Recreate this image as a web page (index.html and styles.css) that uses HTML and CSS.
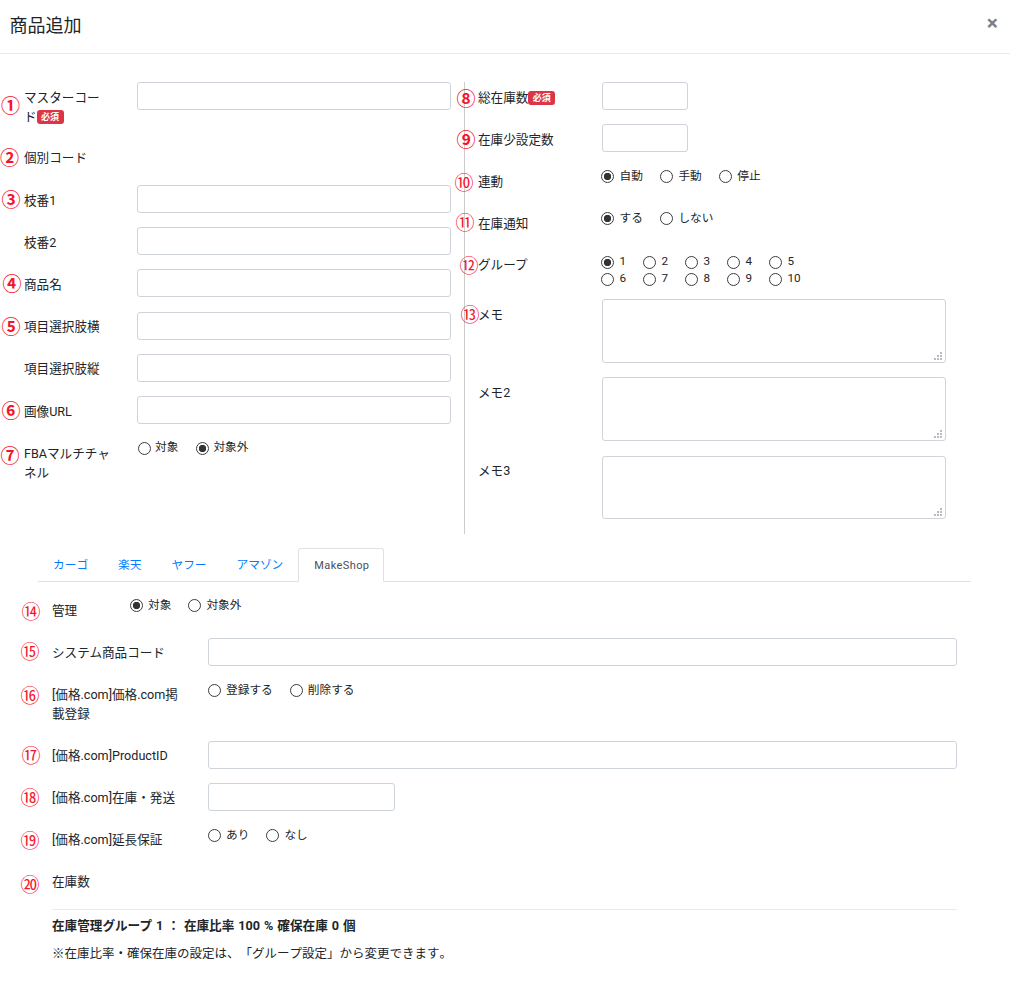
FILE: index.html
```html
<!DOCTYPE html>
<html lang="ja">
<head>
<meta charset="utf-8">
<title>商品追加</title>
<link rel="stylesheet" href="styles.css">
</head>
<body>
<div class="page">
  <header class="head">
    <h1 class="title">商品追加</h1>
    <span class="close">×</span>
  </header>

  <div class="main">
    <div class="col-left">
      <div class="row row-tall"><label class="lbl">マスターコード<span class="badge">必須</span></label><input class="inp inp-left" type="text"></div>
      <div class="row"><label class="lbl">個別コード</label></div>
      <div class="row"><label class="lbl">枝番1</label><input class="inp inp-left" type="text"></div>
      <div class="row"><label class="lbl">枝番2</label><input class="inp inp-left" type="text"></div>
      <div class="row"><label class="lbl">商品名</label><input class="inp inp-left" type="text"></div>
      <div class="row"><label class="lbl">項目選択肢横</label><input class="inp inp-left" type="text"></div>
      <div class="row"><label class="lbl">項目選択肢縦</label><input class="inp inp-left" type="text"></div>
      <div class="row"><label class="lbl">画像URL</label><input class="inp inp-left" type="text"></div>
      <div class="row">
        <label class="lbl">FBAマルチチャネル</label>
        <div class="radios radios-left">
          <label class="radio"><input type="radio" name="fba"><span>対象</span></label>
          <label class="radio"><input type="radio" name="fba" checked><span>対象外</span></label>
        </div>
      </div>
    </div>

    <div class="col-right">
      <div class="row"><label class="lbl-r">総在庫数<span class="badge">必須</span></label><input class="inp inp-short" type="text"></div>
      <div class="row"><label class="lbl-r">在庫少設定数</label><input class="inp inp-short" type="text"></div>
      <div class="row">
        <label class="lbl-r">連動</label>
        <div class="radios radios-right">
          <label class="radio"><input type="radio" name="link" checked><span>自動</span></label>
          <label class="radio"><input type="radio" name="link"><span>手動</span></label>
          <label class="radio"><input type="radio" name="link"><span>停止</span></label>
        </div>
      </div>
      <div class="row">
        <label class="lbl-r">在庫通知</label>
        <div class="radios radios-right">
          <label class="radio"><input type="radio" name="notify" checked><span>する</span></label>
          <label class="radio"><input type="radio" name="notify"><span>しない</span></label>
        </div>
      </div>
      <div class="row row-group">
        <label class="lbl-r">グループ</label>
        <div class="radio-grid">
          <label class="radio"><input type="radio" name="grp" checked><span>1</span></label>
          <label class="radio"><input type="radio" name="grp"><span>2</span></label>
          <label class="radio"><input type="radio" name="grp"><span>3</span></label>
          <label class="radio"><input type="radio" name="grp"><span>4</span></label>
          <label class="radio"><input type="radio" name="grp"><span>5</span></label>
          <label class="radio"><input type="radio" name="grp"><span>6</span></label>
          <label class="radio"><input type="radio" name="grp"><span>7</span></label>
          <label class="radio"><input type="radio" name="grp"><span>8</span></label>
          <label class="radio"><input type="radio" name="grp"><span>9</span></label>
          <label class="radio"><input type="radio" name="grp"><span>10</span></label>
        </div>
      </div>
      <div class="row"><label class="lbl-r">メモ</label><textarea class="memo"></textarea></div>
      <div class="row row-memo2"><label class="lbl-r">メモ2</label><textarea class="memo"></textarea></div>
      <div class="row row-memo3"><label class="lbl-r">メモ3</label><textarea class="memo memo-short"></textarea></div>
    </div>
  </div>

  <nav class="tabs">
    <a class="tab">カーゴ</a>
    <a class="tab">楽天</a>
    <a class="tab">ヤフー</a>
    <a class="tab">アマゾン</a>
    <a class="tab tab-active">MakeShop</a>
  </nav>

  <section class="panel">
    <div class="row">
      <label class="lbl-b lbl-narrow">管理</label>
      <div class="radios radios-bottom">
        <label class="radio"><input type="radio" name="mng" checked><span>対象</span></label>
        <label class="radio"><input type="radio" name="mng"><span>対象外</span></label>
      </div>
    </div>
    <div class="row"><label class="lbl-b">システム商品コード</label><input class="inp inp-wide" type="text"></div>
    <div class="row row-tall">
      <label class="lbl-b">[価格.com]価格.com掲載登録</label>
      <div class="radios radios-bottom">
        <label class="radio"><input type="radio" name="kakaku"><span>登録する</span></label>
        <label class="radio"><input type="radio" name="kakaku"><span>削除する</span></label>
      </div>
    </div>
    <div class="row"><label class="lbl-b">[価格.com]ProductID</label><input class="inp inp-wide" type="text"></div>
    <div class="row"><label class="lbl-b">[価格.com]在庫・発送</label><input class="inp inp-mid" type="text"></div>
    <div class="row">
      <label class="lbl-b">[価格.com]延長保証</label>
      <div class="radios radios-bottom">
        <label class="radio"><input type="radio" name="warranty"><span>あり</span></label>
        <label class="radio"><input type="radio" name="warranty"><span>なし</span></label>
      </div>
    </div>
    <div class="row row-stock"><label class="lbl-b">在庫数</label></div>
    <div class="stock">
      <p class="stock-main">在庫管理グループ 1 ： 在庫比率 100 % 確保在庫 0 個</p>
      <p class="stock-note">※在庫比率・確保在庫の設定は、「グループ設定」から変更できます。</p>
    </div>
  </section>

  <span class="pin bold p1">①</span>
  <span class="pin bold p2">②</span>
  <span class="pin bold p3">③</span>
  <span class="pin bold p4">④</span>
  <span class="pin bold p5">⑤</span>
  <span class="pin bold p6">⑥</span>
  <span class="pin bold p7">⑦</span>
  <span class="pin bold p8">⑧</span>
  <span class="pin bold p9">⑨</span>
  <span class="pin p10">⑩</span>
  <span class="pin p11">⑪</span>
  <span class="pin p12">⑫</span>
  <span class="pin p13">⑬</span>
  <span class="pin p14">⑭</span>
  <span class="pin p15">⑮</span>
  <span class="pin p16">⑯</span>
  <span class="pin p17">⑰</span>
  <span class="pin p18">⑱</span>
  <span class="pin p19">⑲</span>
  <span class="pin p20">⑳</span>
</div>
</body>
</html>
```
FILE: styles.css
```css
* { box-sizing: border-box; }
html, body { margin: 0; padding: 0; background: #fff; }
body {
  font-family: "Roboto", "Noto Sans CJK JP", sans-serif;
  font-size: 12.6px;
  line-height: 19px;
  color: #212529;
  text-spacing-trim: space-all;
}
.page { position: relative; width: 1010px; height: 996px; overflow: hidden; }

.head {
  height: 54px;
  border-bottom: 1px solid #e9ecef;
  display: flex;
  align-items: center;
  justify-content: space-between;
  padding: 0 12px 2px 9.5px;
}
.title { margin: 0; font-size: 18px; font-weight: 400; line-height: 27px; }
.close { font-size: 21px; font-weight: 700; line-height: 1; color: #808080; margin-bottom: 4px; }

.main { display: flex; margin-top: 28px; height: 452px; }
.col-left { width: 464px; padding-left: 24px; }
.col-right { flex: 1; border-left: 1px solid #ccc; padding-left: 13px; }

.row { display: flex; align-items: flex-start; min-height: 28px; margin-bottom: 14.2px; }
.row-tall { min-height: 47px; margin-bottom: 13.8px; }
.row-group { height: 34px; }
.row-group .lbl-r { margin-top: -1px; }
.row-memo2 { margin-bottom: 15px; }
.row-memo3 .lbl-r { margin-top: -1px; }

.lbl, .lbl-r { padding: 5.6px 0 3.4px; flex: none; }
.lbl-b { padding: 5px 0 4px; flex: none; }
.lbl { width: 87px; margin-right: 26px; }
.lbl-r { width: 124px; }
.lbl-b { width: 130px; margin-right: 26px; }
.lbl-narrow { width: 78px; margin-right: 0; }

.badge {
  display: inline-block;
  width: 27px;
  height: 14px;
  margin-top: 3px;
  line-height: 14px;
  border-radius: 3px;
  background: #dc3545;
  color: #fff;
  font-size: 9px;
  font-weight: 700;
  text-align: center;
  vertical-align: top;
}

.inp {
  height: 28px;
  border: 1px solid #ced4da;
  border-radius: 3px;
  background: #fff;
  padding: 0 8px;
  outline: none;
}
.inp-left { width: 314px; }
.inp-short { width: 86px; }
.inp-wide { width: 749px; }
.inp-mid { width: 187px; }

.memo {
  display: block;
  width: 344px;
  height: 64px;
  border: 1px solid #ced4da;
  border-radius: 3px;
  outline: none;
  resize: none;
  background-color: #fff;
  background-repeat: no-repeat;
  background-size: 2px 2px;
  background-image:
    linear-gradient(#bbb, #bbb), linear-gradient(#bbb, #bbb), linear-gradient(#bbb, #bbb),
    linear-gradient(#bbb, #bbb), linear-gradient(#bbb, #bbb), linear-gradient(#bbb, #bbb);
  background-position:
    right 3px bottom 2px, right 6px bottom 2px, right 9px bottom 2px,
    right 3px bottom 5px, right 6px bottom 5px,
    right 3px bottom 8px;
}
.memo-short { height: 63px; }

.radios { display: flex; gap: 18px; padding-top: 3.5px; }
.radios-left { margin-left: 1px; }
.radios-right { margin-left: -1px; gap: 17px; }
.radios-right .radio, .radio-grid .radio { gap: 5.5px; }
.radios-bottom { gap: 17px; }
.radios-bottom .radio { gap: 5px; }
.radio-grid {
  display: grid;
  grid-template-columns: repeat(5, 42px);
  grid-auto-rows: 17px;
  margin-left: -1px;
  padding-top: 3.5px;
}
.radio { display: flex; align-items: center; gap: 4px; font-size: 11.7px; line-height: 13px; }
.radio span { position: relative; top: -1px; }
.radios-right .radio span, .radios-bottom .radio span { top: 0; }
.radio input {
  appearance: none;
  -webkit-appearance: none;
  flex: none;
  width: 13px;
  height: 13px;
  margin: 0;
  border: 1px solid #3c3c3c;
  border-radius: 50%;
  background: #fff;
}
.radio input:checked {
  background: radial-gradient(circle, #333 0 3.4px, #fff 4px);
}

.tabs {
  display: flex;
  margin: 14px 39px 0 38px;
  height: 34px;
  border-bottom: 1px solid #dee2e6;
}
.tab {
  height: 34px;
  padding: 8px 15px 0;
  font-size: 11.7px;
  line-height: 18px;
  color: #007bff;
}
.tab-active {
  padding: 8px 15px 0;
  width: 86px;
  border: 1px solid #dee2e6;
  border-bottom-color: #fff;
  border-radius: 3px 3px 0 0;
  color: #495057;
  font-size: 11px;
  letter-spacing: 0.4px;
}

.panel { padding: 13.8px 14px 0 52px; }
.row-stock { margin-bottom: 13px; }
.row-stock .lbl-b { padding: 4px 0 5px; }
.stock { border-top: 1px solid #e9ecef; width: 905px; padding-top: 6px; }
.stock p { margin: 0; }
.stock-main { font-weight: 700; word-spacing: 0.9px; }
.stock-note {
  margin-top: 8px !important;
  font-family: "Noto Sans CJK JP", sans-serif;
  font-size: 12.5px;
  font-kerning: none;
}

.pin {
  position: absolute;
  transform: translate(-50%, -50%);
  font-family: "Noto Sans CJK JP", sans-serif;
  font-size: 19px;
  line-height: 20px;
  color: #f5142d;
}
.bold { font-weight: 700; }
.p1 { left: 10.5px; top: 105px; }
.p2 { left: 9.5px; top: 157px; }
.p3 { left: 11px; top: 199px; }
.p4 { left: 12px; top: 283px; }
.p5 { left: 11px; top: 326px; }
.p6 { left: 11px; top: 410px; }
.p7 { left: 10px; top: 455px; }
.p8 { left: 466px; top: 98px; }
.p9 { left: 466px; top: 139px; }
.p10 { left: 464px; top: 182px; }
.p11 { left: 465px; top: 222px; }
.p12 { left: 469px; top: 265px; }
.p13 { left: 470px; top: 314px; }
.p14 { left: 31px; top: 611px; }
.p15 { left: 30px; top: 651px; }
.p16 { left: 30px; top: 695px; }
.p17 { left: 31px; top: 755px; }
.p18 { left: 30px; top: 797px; }
.p19 { left: 30px; top: 840px; }
.p20 { left: 30px; top: 884px; }
```
